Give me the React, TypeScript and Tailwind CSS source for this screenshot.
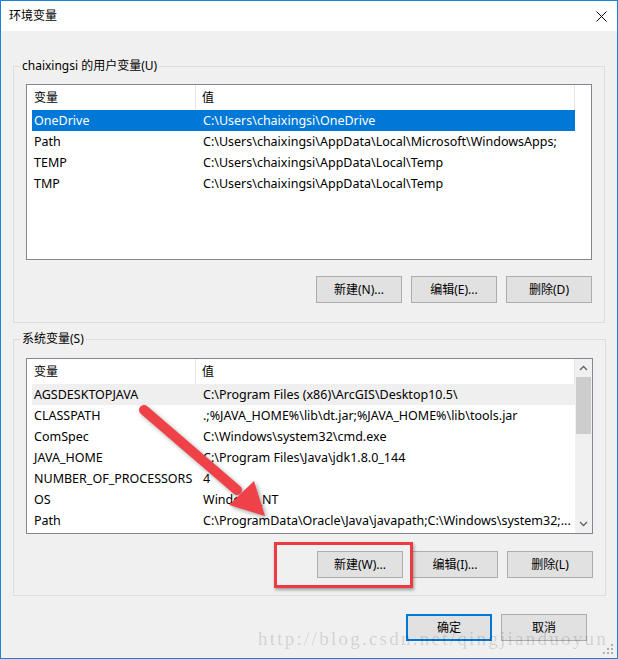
import React from 'react';

type Row = { name: string; value: string };

const userVars: Row[] = [
	{ name: 'OneDrive', value: 'C:\\Users\\chaixingsi\\OneDrive' },
	{ name: 'Path', value: 'C:\\Users\\chaixingsi\\AppData\\Local\\Microsoft\\WindowsApps;' },
	{ name: 'TEMP', value: 'C:\\Users\\chaixingsi\\AppData\\Local\\Temp' },
	{ name: 'TMP', value: 'C:\\Users\\chaixingsi\\AppData\\Local\\Temp' },
];

const systemVars: Row[] = [
	{ name: 'AGSDESKTOPJAVA', value: 'C:\\Program Files (x86)\\ArcGIS\\Desktop10.5\\' },
	{ name: 'CLASSPATH', value: '.;%JAVA_HOME%\\lib\\dt.jar;%JAVA_HOME%\\lib\\tools.jar' },
	{ name: 'ComSpec', value: 'C:\\Windows\\system32\\cmd.exe' },
	{ name: 'JAVA_HOME', value: 'C:\\Program Files\\Java\\jdk1.8.0_144' },
	{ name: 'NUMBER_OF_PROCESSORS', value: '4' },
	{ name: 'OS', value: 'Windows_NT' },
	{ name: 'Path', value: 'C:\\ProgramData\\Oracle\\Java\\javapath;C:\\Windows\\system32;...' },
];

function Button({ label, primary }: { label: string; primary?: boolean }) {
	return (
		<button
			className={
				'w-[86px] h-[27px] bg-[#e1e1e1] text-[12px] text-black flex items-center justify-center ' +
				(primary ? 'border-2 border-[#0078d7]' : 'border border-[#adadad]')
			}
		>
			{label}
		</button>
	);
}

function Header() {
	return (
		<div className="flex h-[25px] items-center pl-[5px]">
			<div className="w-[164px] h-full flex items-center pl-[2px] border-r border-[#e5e5e5]">变量</div>
			<div className="w-[379px] h-full flex items-center pl-[6px] border-r border-[#e5e5e5]">值</div>
		</div>
	);
}

function VarRow({ row, style }: { row: Row; style: string }) {
	return (
		<div className={'flex h-[21px] items-center pt-[1px] ml-[5px] w-[543px] text-[12.5px] ' + style}>
			<div className="w-[165px] pl-[2px] whitespace-nowrap">{row.name}</div>
			<div className="pl-[6px] whitespace-nowrap">{row.value}</div>
		</div>
	);
}

function ScrollBar() {
	return (
		<div className="w-[17px] h-full bg-[#f0f0f0] flex flex-col">
			<div className="h-[18px] flex items-center justify-center">
				<svg width="9" height="6" viewBox="0 0 9 6">
					<path d="M1 5 L4.5 1.5 L8 5" fill="none" stroke="#606060" strokeWidth="1.3" />
				</svg>
			</div>
			<div className="h-[57px] mx-[1px] bg-[#cdcdcd]" />
			<div className="flex-1" />
			<div className="h-[18px] flex items-center justify-center">
				<svg width="9" height="6" viewBox="0 0 9 6">
					<path d="M1 1 L4.5 4.5 L8 1" fill="none" stroke="#606060" strokeWidth="1.3" />
				</svg>
			</div>
		</div>
	);
}

export default function App() {
	return (
		<div
			className="relative w-[618px] h-[659px] bg-[#f0f0f0] border border-[#1883d7] flex flex-col text-[12px] text-black overflow-hidden"
			style={{ fontFamily: '"Noto Sans", "Noto Sans CJK SC", sans-serif' }}
		>
			{/*Title bar*/}
			<div className="h-[30px] bg-white flex items-center justify-between pl-2 pr-[10px]">
				<span className="text-[12px]">环境变量</span>
				<svg width="11" height="11" viewBox="0 0 11 11">
					<path d="M0.5 0.5 L10.5 10.5 M10.5 0.5 L0.5 10.5" stroke="#000" strokeWidth="1" />
				</svg>
			</div>

			<div className="px-3 flex flex-col">
				{/*User variables*/}
				<fieldset className="mt-[27px] border border-[#dcdcdc] px-3 pb-[19px]">
					<legend className="-ml-[6px] px-[2px] leading-[16px]">chaixingsi 的用户变量(U)</legend>
					<div className="mt-[10px] h-[176px] bg-white border border-[#828790]">
						<Header />
						{userVars.map((row, i) => (
							<VarRow key={i} row={row} style={i === 0 ? 'bg-[#0078d7] text-white' : ''} />
						))}
					</div>
					<div className="mt-[16px] flex justify-end gap-[9px]">
						<Button label="新建(N)..." />
						<Button label="编辑(E)..." />
						<Button label="删除(D)" />
					</div>
				</fieldset>

				{/*System variables*/}
				<fieldset className="mt-[8px] border border-[#dcdcdc] px-3 pb-[17px]">
					<legend className="-ml-[6px] px-[2px] leading-[16px]">系统变量(S)</legend>
					<div className="mt-[11px] h-[176px] bg-white border border-[#828790] flex">
						<div className="flex-1 overflow-hidden">
							<Header />
							{systemVars.map((row, i) => (
								<VarRow key={i} row={row} style={i === 0 ? 'bg-[#efefef]' : ''} />
							))}
						</div>
						<ScrollBar />
					</div>
					<div className="mt-[17px] flex justify-end gap-[9px]">
						<Button label="新建(W)..." />
						<Button label="编辑(I)..." />
						<Button label="删除(L)" />
					</div>
				</fieldset>

				<div className="mt-[18px] pr-[18px] flex justify-end gap-[9px]">
					<Button label="确定" primary />
					<Button label="取消" />
				</div>
			</div>

			{/*Annotations*/}
			<svg
				className="absolute left-0 top-0 pointer-events-none drop-shadow-[2px_2px_2px_rgba(0,0,0,0.35)]"
				width="618"
				height="659"
			>
				<line x1="143" y1="409" x2="236" y2="489" stroke="#ef4148" strokeWidth="10" strokeLinecap="round" />
				<polygon points="228,504 253,480 264,515" fill="#ef4148" />
			</svg>
			<div className="absolute left-[273px] top-[541px] w-[139px] h-[46px] border-[3px] border-[#ee3b43] shadow-[1px_2px_3px_rgba(0,0,0,0.35)]" />

			<div
				className="absolute left-[257px] top-[624px] text-[19px] tracking-[2.25px] text-black/15 whitespace-nowrap pointer-events-none"
				style={{ fontFamily: '"Liberation Serif", serif' }}
			>
				http://blog.csdn.net/qingjianduoyun
			</div>

			{/*Resize grip*/}
			<svg className="absolute right-[3px] bottom-[3px]" width="11" height="11" viewBox="0 0 11 11">
				<rect x="8" y="0" width="2" height="2" fill="#b0b0b0" />
				<rect x="4" y="4" width="2" height="2" fill="#b0b0b0" />
				<rect x="8" y="4" width="2" height="2" fill="#b0b0b0" />
				<rect x="0" y="8" width="2" height="2" fill="#b0b0b0" />
				<rect x="4" y="8" width="2" height="2" fill="#b0b0b0" />
				<rect x="8" y="8" width="2" height="2" fill="#b0b0b0" />
			</svg>
		</div>
	);
}
